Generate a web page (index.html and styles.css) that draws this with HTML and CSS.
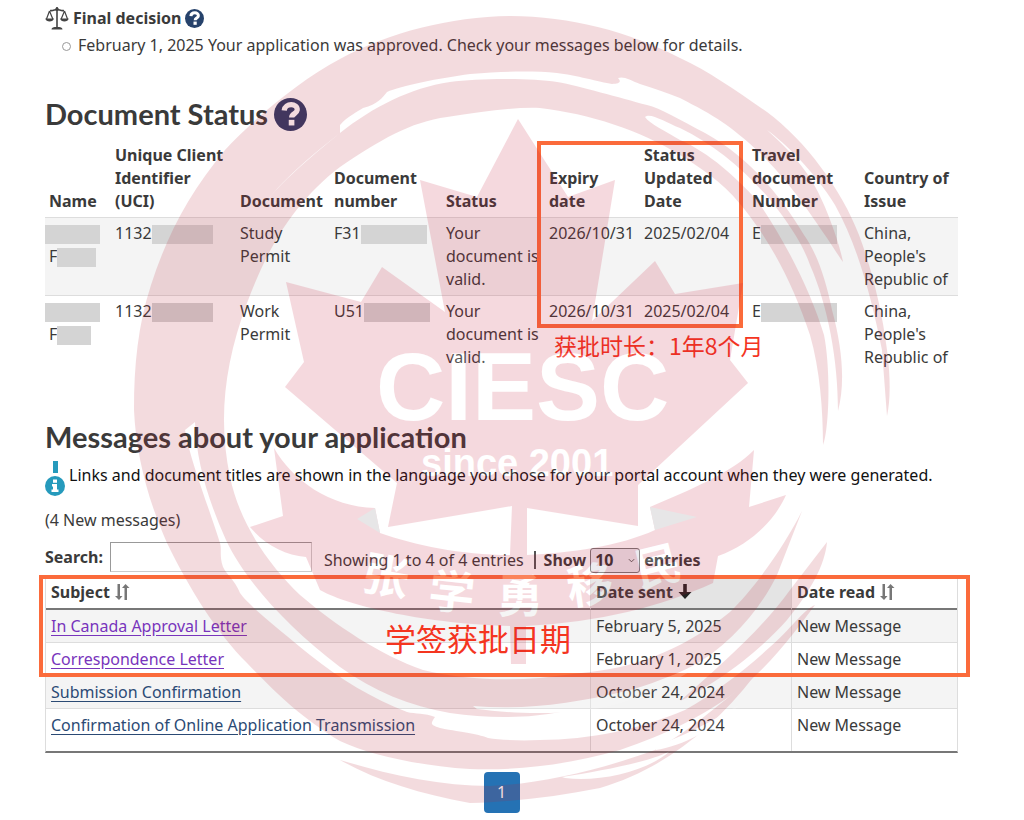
FILE: index.html
```html
<!DOCTYPE html>
<html lang="en">
<head>
<meta charset="utf-8">
<title>Application status</title>
<meta name="viewport" content="width=device-width, initial-scale=1">
<link rel="stylesheet" href="styles.css">
</head>
<body>
<main class="page">
  <section>
    <h3 class="step">
      <svg class="scales" viewBox="0 0 24 24" aria-hidden="true">
        <path d="M12 1v20M5 4.500c3 .8 4.500-1 7-1s4 1.800 7 1" fill="none" stroke="#444" stroke-width="1.600"/>
        <path d="M4.500 5 1.500 13M4.500 5l3.300 8M19.500 5l-3.300 8M19.500 5l3 8" fill="none" stroke="#444" stroke-width="1.200"/>
        <path d="M.3 12.500h8.600c-.4 4-8.200 4-8.600 0zM15.100 12.500h8.600c-.4 4-8.200 4-8.600 0zM6.500 23.500c0-2 2-2.500 5.500-2.500s5.500.5 5.500 2.500z" fill="#444"/>
        <circle cx="12" cy="3.300" r="1.800" fill="#444"/>
      </svg>
      Final decision
      <svg class="help help-small" viewBox="0 0 34 34" role="img" aria-label="Help"><circle cx="17" cy="17" r="17"/><path d="M10.500 12.800c.8-8 14-7.600 13.400-.4-.4 4-5.700 3.800-5.700 7.800" fill="none" stroke="#fff" stroke-width="5.400"/><path d="M15.200 22.500h5.800v5.800h-5.800z" fill="#fff"/></svg>
    </h3>
    <ul class="events">
      <li>February 1, 2025 Your application was approved. Check your messages below for details.</li>
    </ul>
  </section>

  <section class="documents">
    <h2>Document Status
      <svg class="help help-large" viewBox="0 0 34 34" role="img" aria-label="Help"><circle cx="17" cy="17" r="17"/><path d="M10.500 12.800c.8-8 14-7.600 13.400-.4-.4 4-5.700 3.800-5.700 7.800" fill="none" stroke="#fff" stroke-width="5.400"/><path d="M15.200 22.500h5.800v5.800h-5.800z" fill="#fff"/></svg>
    </h2>
    <div class="marked">
      <table class="doc-table">
        <colgroup><col class="w-name"><col class="w-uci"><col class="w-doc"><col class="w-num"><col class="w-status"><col class="w-expiry"><col class="w-updated"><col class="w-travel"><col class="w-country"></colgroup>
        <thead>
          <tr><th>Name</th><th>Unique Client Identifier (UCI)</th><th>Document</th><th>Document number</th><th>Status</th><th>Expiry date</th><th>Status Updated Date</th><th>Travel document Number</th><th>Country of Issue</th></tr>
        </thead>
        <tbody>
          <tr>
            <td><span class="mask mask-name"></span><br>F<span class="mask mask-first"></span></td>
            <td>1132<span class="mask mask-uci"></span></td>
            <td>Study Permit</td>
            <td>F31<span class="mask mask-number"></span></td>
            <td>Your document is valid.</td>
            <td>2026/10/31</td><td>2025/02/04</td>
            <td>E<span class="mask mask-travel"></span></td>
            <td>China, People's Republic of</td>
          </tr>
          <tr>
            <td><span class="mask mask-name"></span><br>F<span class="mask mask-short"></span></td>
            <td>1132<span class="mask mask-uci"></span></td>
            <td>Work Permit</td>
            <td>U51<span class="mask mask-number"></span></td>
            <td>Your document is valid.</td>
            <td>2026/10/31</td><td>2025/02/04</td>
            <td>E<span class="mask mask-travel"></span></td>
            <td>China, People's Republic of</td>
          </tr>
        </tbody>
      </table>
      <div class="frame frame-dates"></div>
      <p class="note note-duration" lang="zh">获批时长：1年8个月</p>
    </div>
  </section>

  <section class="messages">
    <h2>Messages about your application</h2>
    <div class="notice">
      <svg viewBox="0 0 20 36" aria-hidden="true"><path d="M8 0h5v12H8z" fill="#269abc"/><circle cx="10" cy="25" r="10" fill="#269abc"/><path d="M8 18.500h4v3.200H8zM7 23h5v5.500h1.500V31h-7v-2.500H8v-3H7z" fill="#fff"/></svg>
      <p>Links and document titles are shown in the language you chose for your portal account when they were generated.</p>
    </div>
    <p class="count">(4 New messages)</p>
    <div class="controls">
      <label class="strong" for="search">Search:</label>
      <input id="search" type="search">
      <span class="info">Showing 1 to 4 of 4 entries</span>
      <label class="strong length">Show
        <select><option>10</option><option>25</option></select>
        entries</label>
    </div>
    <div class="marked">
      <table class="msg-table">
        <colgroup><col class="w-subject"><col class="w-sent"><col class="w-read"></colgroup>
        <thead>
          <tr>
            <th>Subject <svg class="sort" viewBox="0 0 16 16" aria-hidden="true"><path d="M3.500 0h2.500v12H8.500l-3.500 4-4-4h2.500zM10.500 16V4H8l3.500-4 4 4H13v12z"/></svg></th>
            <th class="sorted">Date sent <svg class="sort sort-on" viewBox="0 0 16 16" aria-hidden="true"><path d="M6.200 0h3.600v8h4.700L8 15 1.500 8h4.700z"/></svg></th>
            <th>Date read <svg class="sort" viewBox="0 0 16 16" aria-hidden="true"><path d="M3.500 0h2.500v12H8.500l-3.500 4-4-4h2.500zM10.500 16V4H8l3.500-4 4 4H13v12z"/></svg></th>
          </tr>
        </thead>
        <tbody>
          <tr><td><a class="visited" href="#approval">In Canada Approval Letter</a></td><td>February 5, 2025</td><td>New Message</td></tr>
          <tr><td><a class="visited" href="#correspondence">Correspondence Letter</a></td><td>February 1, 2025</td><td>New Message</td></tr>
          <tr><td><a href="#submission">Submission Confirmation</a></td><td>October 24, 2024</td><td>New Message</td></tr>
          <tr><td><a href="#transmission">Confirmation of Online Application Transmission</a></td><td>October 24, 2024</td><td>New Message</td></tr>
        </tbody>
      </table>
      <div class="frame frame-letters"></div>
      <p class="note note-date" lang="zh">学签获批日期</p>
    </div>
    <nav class="pager"><button type="button">1</button></nav>
  </section>

  <svg class="watermark" viewBox="0 0 1024 820" aria-hidden="true">
    <g fill="#ba2437">
      <path d="M255 218C267 197 290 172 340 133L340 125C348 116 357 112 363 108C378 104 382 98 387 92C400 86 440 78 470 74C507 71 535 71 557 73C575 75 600 82 612 84C619 84 622 82 618 78C624 76 630 80 640 84C655 89 668 93 680 98C715 116 730 125 760 153C785 178 800 198 827 238C835 250 840 258 843 262C839 242 828 212 818 192C805 166 785 146 767 130C785 143 815 172 835 205C858 246 872 300 882 350L887 416C890 402 891 380 887 350C882 310 872 270 859 235C842 190 805 140 767 112C735 90 710 72 680 58C630 32 570 16 510 16C450 17 390 32 340 59C300 80 255 118 225 150C190 192 167 235 151 285C138 325 134 365 134 410C136 455 148 500 167 543C190 590 217 633 247 663C275 692 300 717 340 741C370 755 420 766 470 769C520 771 570 764 620 750C665 735 710 713 745 685C775 660 800 625 815 605C803 610 790 630 770 647C745 670 715 693 685 710C640 729 590 740 540 740C520 741 500 740 488 738C475 733 465 733 440 728C429 725 431 723 435 717C425 713 415 714 407 712C373 699 340 679 310 655C282 632 250 607 240 593C235 580 226 574 223 567C219 555 222 550 220 543C208 505 190 460 185 430L195 422C196 460 208 500 226 540C245 580 285 625 340 667C373 691 410 706 450 713C490 719 530 718 560 712C610 703 650 690 690 668C730 645 760 610 777 575L802 511C785 545 755 588 730 612C690 645 640 667 590 672L540 678C500 681 460 679 423 670C380 655 335 625 300 595C270 566 240 525 230 477C218 420 224 365 247 303C265 255 290 205 340 167C380 140 410 122 447 117C480 112 510 107 540 108C590 114 640 130 680 155C710 173 730 190 745 210C775 248 795 290 810 335C820 370 823 410 823 445C829 430 831 370 824 335C812 295 788 245 757 200C735 177 710 153 680 140C665 131 650 124 645 117C650 112 665 122 680 128C715 145 745 170 772 202C790 225 803 245 810 265C828 306 838 360 838 411C845 385 843 350 832 310C825 275 815 250 804 235C780 195 750 158 705 133C680 120 660 108 647 105C620 98 580 86 557 82C530 78 480 78 450 82C410 88 373 107 340 133C310 158 272 188 255 218Z"/>
      <path d="M340 760C390 775 440 786 490 786C540 784 600 770 655 750C680 737 720 705 755 675C710 733 660 770 600 788C555 797 510 802 470 803C420 794 375 780 340 760ZM827 542C825 565 810 592 787 620C755 656 710 687 680 701C720 666 763 628 790 590Z"/>
    </g>
    <path fill="#fff" d="M473 706C520 710 570 705 630 690C660 682 690 668 714 655C680 680 640 702 590 710C540 716 500 712 477 709ZM655 746C680 738 715 720 740 704C720 727 680 747 656 750ZM562 777C600 771 650 762 670 751C650 770 600 783 565 778Z"/>
    <path fill="#c71837" d="M518 119L477 197L420 180L445 312L382 267L361 302L286 282L304 362L285 387L397 483L388 527L512 506L510 555C460 555 415 545 380 533L375 508C330 507 292 480 274 448L283 516L250 527C265 545 285 555 306 557L320 590C350 607 430 624 510 626L511 664H526V626C600 622 660 607 713 583L718 556C750 545 775 520 786 495L749 507L754 450C733 472 690 490 650 507L655 530C620 546 570 553 527 555V508L638 526V485L748 383L730 360L743 283L675 294L655 261L592 321L615 180L568 197Z"/>
    <path fill="#706a70" d="M357 519L375 508L380 533ZM650 507L697 517L655 530Z"/>
    <g fill="#fff" font-weight="700">
      <text class="latin" x="376" y="420" font-size="96">CIESC</text>
      <text class="latin" x="421" y="476" font-size="38">since 2001</text>
      <g class="han" font-size="46" text-anchor="middle">
        <text x="386" y="593" transform="rotate(10 386 577)">张</text>
        <text x="452" y="609" transform="rotate(6 452 592)">学</text>
        <text x="520" y="612">勇</text>
        <text x="590" y="602" transform="rotate(-8 590 585)">移</text>
        <text x="658" y="583" transform="rotate(-14 658 567)">民</text>
      </g>
    </g>
  </svg>
</main>
</body>
</html>
```
FILE: styles.css
```css
* { box-sizing: border-box; }
body {
  margin: 0;
  background: #fff;
  color: #3a3a3a;
  font: 16px/23px "Noto Sans", "Noto Sans CJK SC", sans-serif;
}
p, h2, h3, ul { margin: 0; padding: 0; }
.page { position: relative; padding: 6px 66px 8px 45px; }
.watermark {
  position: absolute;
  top: 0;
  left: 0;
  width: 100%;
  opacity: .16;
  pointer-events: none;
}
.latin { font-family: "Liberation Sans", Arial, sans-serif; }
.han { font-family: "Noto Sans CJK SC", sans-serif; }

.step { display: flex; align-items: center; gap: 4px; font-size: 16px; line-height: 23px; }
.scales { width: 24px; height: 24px; }
.help { fill: #26426b; flex: none; }
.help-small { width: 19px; height: 19px; }
.help-large { width: 33px; height: 33px; fill: #2b3a66; }
.events { margin-top: 4px; padding-left: 32px; list-style: none; }
.events li { display: flex; align-items: center; }
.events li::before {
  content: "";
  width: 7px;
  height: 7px;
  margin: 2px 7px 0 -14px;
  margin-left: -15px;
  border: 1px solid #999;
  border-radius: 50%;
}
h2 {
  display: flex;
  align-items: center;
  gap: 6px;
  font: 700 29px/36px Lato, sans-serif;
}
.documents { margin-top: 39px; }
.messages { margin-top: 46px; }
.marked { position: relative; }

table { width: 100%; table-layout: fixed; border-collapse: separate; border-spacing: 0; text-align: left; }
.doc-table { margin-top: 8px; }
.doc-table th, .doc-table td { padding: 4px 5px 4px 4px; vertical-align: top; }
.doc-table th { vertical-align: bottom; }
.doc-table td { border-top: 1px solid #ddd; }
.doc-table tbody tr:first-child { background: #f4f4f4; }
.w-name { width: 66px; }
.w-uci { width: 125px; }
.w-doc { width: 94px; }
.w-num { width: 112px; }
.w-status { width: 103px; }
.w-expiry { width: 95px; }
.w-updated { width: 108px; }
.w-travel { width: 112px; }
.w-country { width: 98px; }
.mask { display: inline-block; height: 19px; background: #d4d4d4; vertical-align: middle; }
.mask-name { width: 55px; margin-left: -4px; }
.mask-first { width: 39px; }
.mask-short { width: 34px; }
.mask-uci { width: 61px; }
.mask-number { width: 66px; }
.mask-travel { width: 76px; }

.frame { position: absolute; border: 4px solid #fb6b3b; }
.frame-dates { left: 492px; top: 1px; width: 206px; height: 187px; }
.frame-letters { left: -6px; right: -12px; top: -2px; height: 102px; }
.note { position: absolute; color: #f4351f; font-family: "Noto Sans CJK SC", sans-serif; white-space: nowrap; }
.note-duration { left: 509px; top: 190px; font-size: 23px; line-height: 30px; }
.note-date { left: 340px; top: 41px; font-size: 31px; line-height: 40px; }

.notice { display: flex; align-items: center; gap: 4px; margin-top: 6px; color: #111; }
.notice svg { width: 20px; height: 36px; flex: none; }
.notice p { margin-bottom: 8px; }
.count { margin-top: 12px; }
.controls { display: flex; align-items: center; margin-top: 10px; height: 30px; }
.strong { font-weight: 700; }
#search {
  width: 202px;
  height: 30px;
  margin-left: 7px;
  border: 1px solid #ccc;
  border-top-color: #999;
  border-left-color: #999;
  background: #fff;
  font: inherit;
}
.info { margin: 6px 10px 0 12px; }
.length { display: flex; align-items: center; gap: 4px; margin-top: 6px; }
.length::before { content: ""; width: 2px; height: 18px; margin-right: 4px; background: #555; }
.length select {
  appearance: none;
  width: 50px;
  height: 25px;
  padding: 0 4px;
  border: 1px solid #777;
  border-radius: 3px;
  background: #e9e9ed url("data:image/svg+xml,%3Csvg xmlns='http://www.w3.org/2000/svg' viewBox='0 0 8 5'%3E%3Cpath d='M1 1l3 3 3-3' fill='none' stroke='%23444'/%3E%3C/svg%3E") right 4px center / 7px 5px no-repeat;
  color: #333;
  font: inherit;
}

.msg-table { margin-top: 5px; border: 1px solid #ddd; border-top: 0; border-bottom: 2px solid #777; }
.msg-table th, .msg-table td { height: 33px; padding: 4px 5px; border-bottom: 1px solid #ddd; }
.msg-table th { height: 32px; border-bottom: 2px solid #777; }
.msg-table th + th, .msg-table td + td { border-left: 1px solid #ddd; }
.msg-table .sorted { background: #e4e4e4; }
.msg-table tbody tr:nth-child(odd) { background: #f4f4f4; }
.msg-table tbody tr:last-child td { height: 42px; padding-bottom: 14px; border-bottom: 0; }
.w-subject { width: 544px; }
.w-sent { width: 201px; }
.w-read { width: 166px; }
.sort { width: 16px; height: 16px; fill: #777; vertical-align: -2px; }
.sort-on { fill: #222; }
a { color: #2b4a74; text-underline-offset: 3px; }
.visited { color: #7834bc; }
.pager { display: flex; justify-content: center; margin-top: 19px; }
.pager button {
  width: 36px;
  height: 41px;
  border: 0;
  border-radius: 4px;
  background: #2572b4;
  color: #fff;
  font: inherit;
}
```
